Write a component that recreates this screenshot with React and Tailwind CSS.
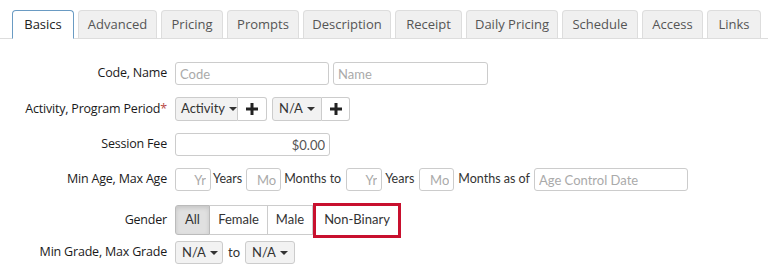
const tabs = [
  { t: "Basics", w: "w-[62px]" },
  { t: "Advanced", w: "w-[79px]" },
  { t: "Pricing", w: "w-[62px]" },
  { t: "Prompts", w: "w-[72px]" },
  { t: "Description", w: "w-[88px]" },
  { t: "Receipt", w: "w-[67px]" },
  { t: "Daily Pricing", w: "w-[92px]" },
  { t: "Schedule", w: "w-[76px]" },
  { t: "Access", w: "w-[61px]" },
  { t: "Links", w: "w-[54px]" },
];

const Caret = () => (
  <span className="inline-block w-0 h-0 border-x-[4px] border-x-transparent border-t-[4px] border-t-[#333] ml-1" />
);

const Plus = () => (
  <svg width="12" height="12" viewBox="0 0 12 12">
    <path d="M4.5 0h3v4.5H12v3H7.5V12h-3V7.5H0v-3h4.5z" fill="#222" />
  </svg>
);

function Row({ label, star, className = "", children }) {
  return (
    <div className={`flex items-center ${className}`}>
      <div className="w-[167px] text-right text-[12.5px] tracking-[-0.2px] text-[#1a1a1a] font-['Open_Sans',sans-serif] whitespace-nowrap">
        {label}
        {star && <span className="text-[#b94a48]">*</span>}
      </div>
      <div className="ml-[8px] flex items-center font-['Lato',sans-serif]">{children}</div>
    </div>
  );
}

const input =
  "h-[23px] border border-[#ccc] rounded-[3px] px-[4px] text-[13px] text-[#555] placeholder:text-[#aaa] outline-none bg-white font-['Lato',sans-serif]";

export default function App() {
  return (
    <div className="w-[768px] h-[276px] bg-white font-['Open_Sans',sans-serif] overflow-hidden">
      <div className="pt-[10px] pl-[12px] flex gap-[4px] border-b border-[#ddd]">
        {tabs.map((tab, i) =>
          i === 0 ? (
            <div
              key={tab.t}
              className={`${tab.w} h-[29px] -mb-px flex items-center justify-center bg-white border border-[#6a9bc3] border-b-white rounded-t-[4px] text-[13px] text-[#222] whitespace-nowrap`}
            >
              {tab.t}
            </div>
          ) : (
            <div
              key={tab.t}
              className={`${tab.w} h-[28px] flex items-center justify-center bg-[#f0f0f0] border border-b-0 border-[#ddd] rounded-t-[4px] text-[13px] text-[#555] whitespace-nowrap`}
            >
              {tab.t}
            </div>
          )
        )}
      </div>

      <div className="pt-[23px] flex flex-col gap-[12px]">
        <Row label="Code, Name">
          <input className={`${input} w-[154px]`} placeholder="Code" />
          <input className={`${input} w-[155px] ml-[4px]`} placeholder="Name" />
        </Row>

        <Row label="Activity, Program Period" star>
          <div className="flex">
            <div className="h-[24px] w-[63px] flex items-center px-[5px] bg-[#f2f2f2] border border-[#ccc] rounded-l-[3px] text-[13px] text-[#333]">
              Activity
              <Caret />
            </div>
            <div className="h-[24px] w-[29px] flex items-center justify-center bg-white border border-l-0 border-[#ccc] rounded-r-[3px]">
              <Plus />
            </div>
          </div>
          <div className="flex ml-[5px]">
            <div className="h-[24px] w-[50px] flex items-center justify-between px-[6px] bg-[#f2f2f2] border border-[#ccc] rounded-l-[3px] text-[13px] text-[#333]">
              N/A
              <Caret />
            </div>
            <div className="h-[24px] w-[28px] flex items-center justify-center bg-white border border-l-0 border-[#ccc] rounded-r-[3px]">
              <Plus />
            </div>
          </div>
        </Row>

        <Row label="Session Fee">
          <input className={`${input} w-[155px] text-right`} defaultValue="$0.00" />
        </Row>

        <Row label="Min Age, Max Age">
          <div className="flex items-center text-[12.5px] text-[#333]">
            <input className={`${input} w-[36px] text-right`} placeholder="Yr" />
            <span className="ml-[2px] mr-[4px]">Years</span>
            <input className={`${input} w-[35px] text-right`} placeholder="Mo" />
            <span className="ml-[3px] mr-[5px]">Months to</span>
            <input className={`${input} w-[36px] text-right`} placeholder="Yr" />
            <span className="ml-[3px] mr-[5px]">Years</span>
            <input className={`${input} w-[35px] text-right`} placeholder="Mo" />
            <span className="ml-[4px] mr-[4px]">Months as of</span>
            <input className={`${input} w-[154px]`} placeholder="Age Control Date" />
          </div>
        </Row>

        <Row label="Gender" className="mt-[2px]">
          <div className="flex items-center text-[13px] text-[#333]">
            <div className="h-[30px] w-[35px] flex items-center justify-center bg-[#e0e0e0] border border-[#bbb] rounded-l-[3px] shadow-[inset_0_2px_4px_rgba(0,0,0,0.12)]">
              All
            </div>
            <div className="h-[30px] w-[58px] flex items-center justify-center bg-white border border-l-0 border-[#ccc]">
              Female
            </div>
            <div className="h-[30px] w-[45px] flex items-center justify-center bg-white border border-l-0 border-[#ccc]">
              Male
            </div>
            <div className="h-[35px] -my-[3px] w-[88px] flex items-center justify-center bg-white border-[3px] border-[#c8102e]">
              Non-Binary
            </div>
          </div>
        </Row>

        <Row label="Min Grade, Max Grade" className="-mt-[6px]">
          <div className="flex items-center text-[13px] text-[#333]">
            <div className="h-[23px] w-[48px] flex items-center justify-between px-[6px] bg-[#f2f2f2] border border-[#ccc] rounded-[3px]">
              N/A
              <Caret />
            </div>
            <span className="mx-[5px]">to</span>
            <div className="h-[23px] w-[50px] flex items-center justify-between px-[6px] bg-[#f2f2f2] border border-[#ccc] rounded-[3px]">
              N/A
              <Caret />
            </div>
          </div>
        </Row>
      </div>
    </div>
  );
}
